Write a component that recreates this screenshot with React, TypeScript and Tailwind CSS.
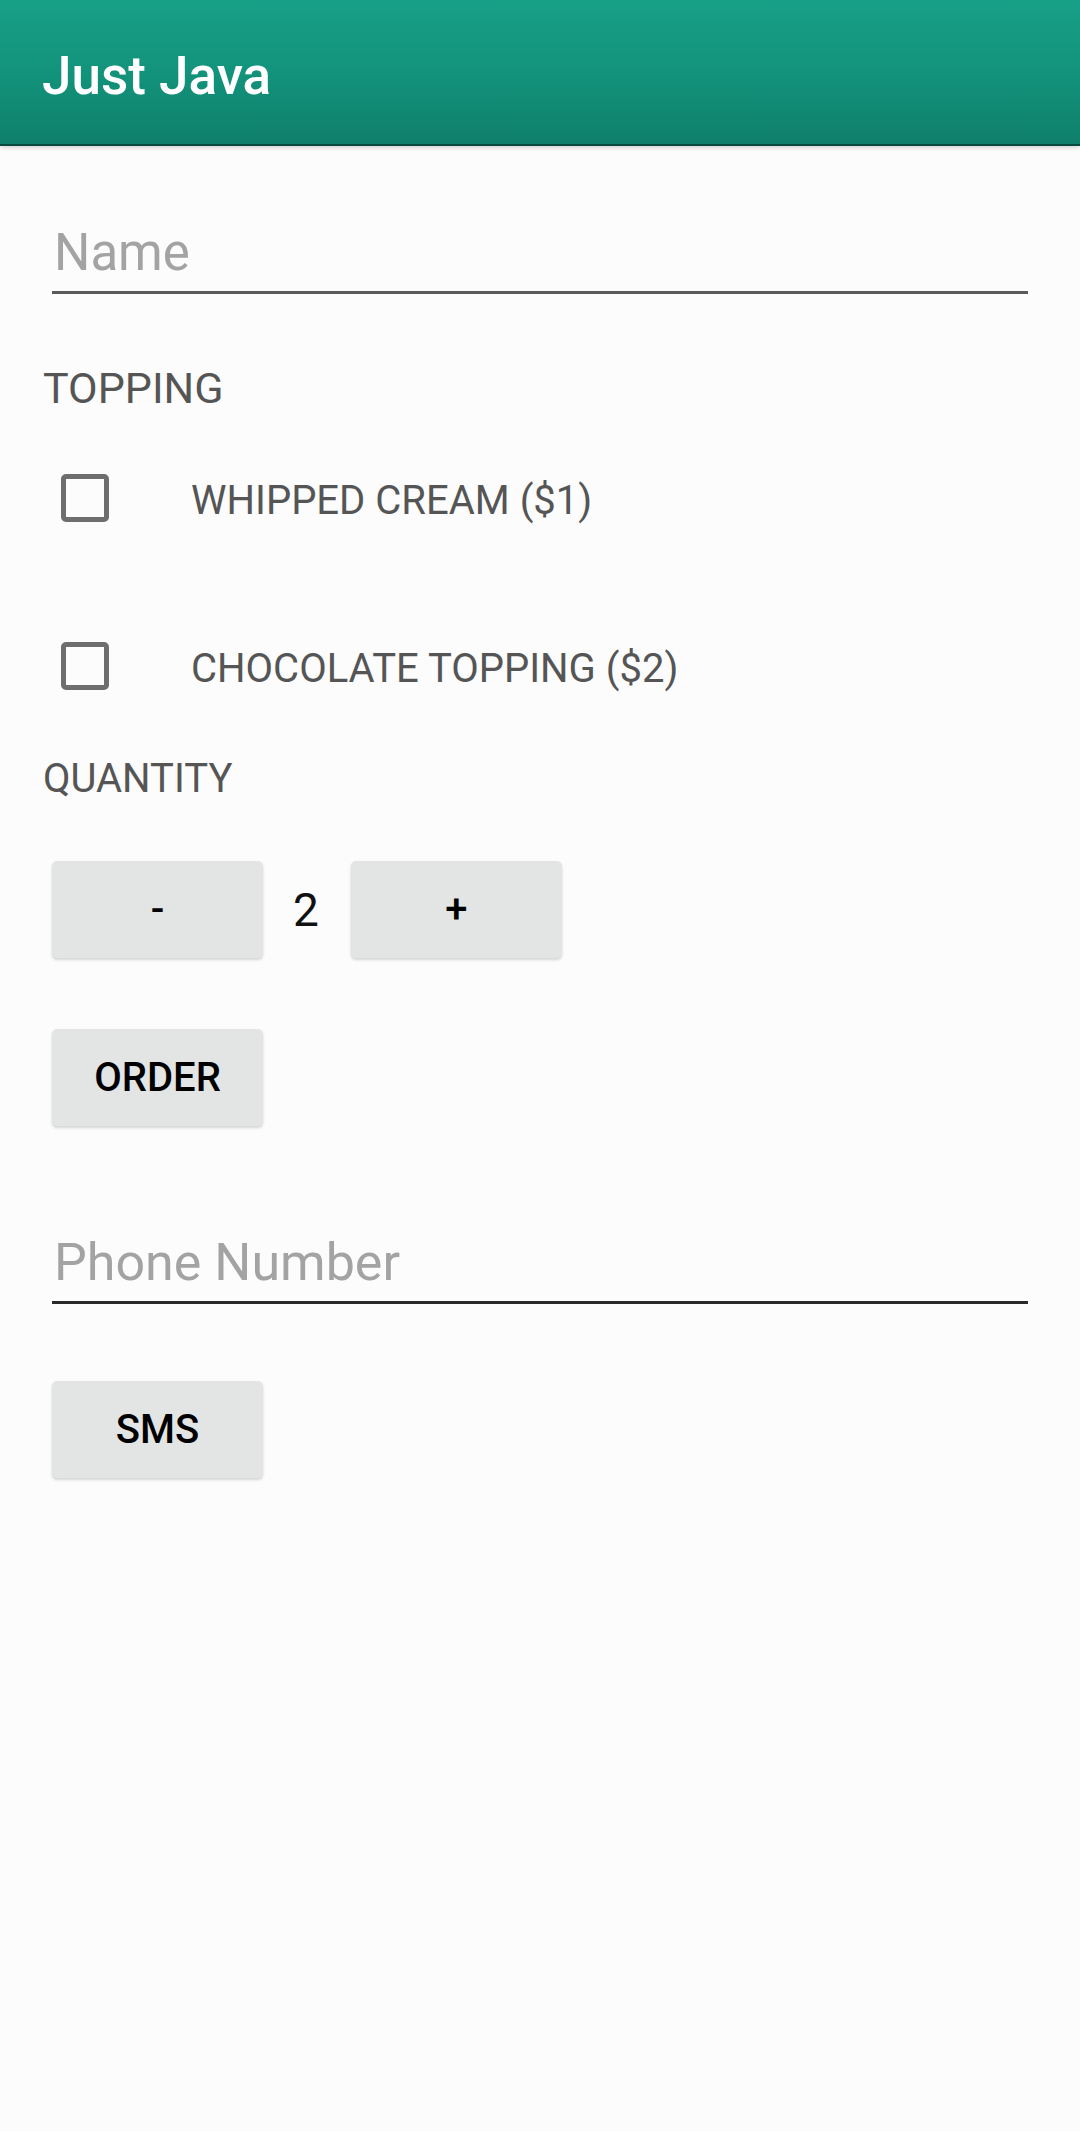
import React from "react";

function Btn({ label, extra = "" }: { label: string; extra?: string }) {
  return (
    <button
      className={`w-[211px] h-[97px] bg-[#e2e5e4] rounded-[5px] shadow-[0_2px_3px_rgba(0,0,0,0.16)] flex items-center justify-center text-[40px] font-medium text-black leading-none ${extra}`}
    >
      {label}
    </button>
  );
}

function CheckRow({ label, extra }: { label: string; extra: string }) {
  return (
    <div className={`h-[112px] flex items-center ${extra}`}>
      <div className="ml-[18px] w-[48px] h-[48px] border-[5px] border-[#6e6e6e] rounded-[5px] shrink-0" />
      <span className="ml-[82px] mt-[5px] text-[40px] leading-[44px] text-[#555555]">{label}</span>
    </div>
  );
}

export default function App() {
  return (
    <div className="w-[1080px] min-h-[2131px] bg-[#fcfcfc] font-['Roboto','Liberation_Sans',sans-serif]">
      <header className="h-[146px] bg-gradient-to-b from-[#18a087] via-[#13937b] to-[#0f7f6b] border-b-[2px] border-[#0a4a3e] flex items-center pt-[8px] pl-[42px] shadow-[0_2px_4px_rgba(0,0,0,0.15)]">
        <h1 className="text-[53px] leading-[53px] font-medium text-white">Just Java</h1>
      </header>

      <main className="px-[43px] flex flex-col items-start">
        <div className="mt-[77px] ml-[9px] w-[976px] pb-[8px] border-b-[3px] border-[#5a5a5a]">
          <input
            type="text"
            placeholder="Name"
            className="w-full h-[60px] leading-[60px] pl-[2px] text-[51px] bg-transparent outline-none placeholder:text-[#a3a3a3] text-black"
          />
        </div>

        <div className="mt-[69px] text-[43px] leading-[50px] text-[#555555]">TOPPING</div>

        <CheckRow label="WHIPPED CREAM ($1)" extra="mt-[29px]" />
        <CheckRow label="CHOCOLATE TOPPING ($2)" extra="mt-[56px]" />

        <div className="mt-[32px] text-[40px] leading-[50px] text-[#555555]">QUANTITY</div>

        <div className="mt-[57px] ml-[9px] flex items-center">
          <Btn label="-" />
          <span className="ml-[30px] mr-[32px] text-[46px] leading-none text-[#111111]">2</span>
          <Btn label="+" />
        </div>

        <Btn label="ORDER" extra="mt-[71px] ml-[9px]" />

        <div className="mt-[107px] ml-[9px] w-[976px] pb-[8px] border-b-[3px] border-[#2a2a2a]">
          <input
            type="tel"
            placeholder="Phone Number"
            className="w-full h-[60px] leading-[60px] pl-[2px] text-[52px] bg-transparent outline-none placeholder:text-[#a3a3a3] text-black"
          />
        </div>

        <Btn label="SMS" extra="mt-[77px] ml-[9px]" />
      </main>
    </div>
  );
}
